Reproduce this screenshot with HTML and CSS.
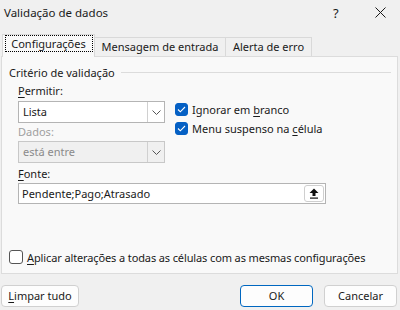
FILE: index.html
```html
<html>
<head>
    <meta charset="utf-8">
    <title>Validação de dados</title>
    <link rel="stylesheet" href="styles.css">
</head>
<body>
<div class="dialog">
    <div class="titlebar">
        <span class="caption">Validação de dados</span>
        <span class="help">?</span>
        <span class="close">
            <svg width="11" height="11" viewBox="0 0 11 11"><path d="M0.5 0.5L10.5 10.5M10.5 0.5L0.5 10.5" stroke="#1a1a1a" stroke-width="1" fill="none"/></svg>
        </span>
    </div>
    <div class="tabs">
        <div class="tab active"><span class="focus">Configurações</span></div>
        <div class="tab second">Mensagem de entrada</div>
        <div class="tab third">Alerta de erro</div>
    </div>
    <div class="panel">
        <div class="group">
            <span class="legend">Critério de validação</span>
            <span class="rule"></span>
        </div>
        <div class="fields">
            <div class="left">
                <div class="label"><u>P</u>ermitir:</div>
                <div class="select">
                    <span class="value">Lista</span>
                    <span class="arrow"><svg width="9" height="5" viewBox="0 0 9 5"><path d="M0.5 0.5L4.5 4.5L8.5 0.5" stroke="#555" fill="none"/></svg></span>
                </div>
                <div class="label disabled">Dados:</div>
                <div class="select off">
                    <span class="value">está entre</span>
                    <span class="arrow"><svg width="9" height="5" viewBox="0 0 9 5"><path d="M0.5 0.5L4.5 4.5L8.5 0.5" stroke="#555" fill="none"/></svg></span>
                </div>
            </div>
            <div class="right">
                <div class="check">
                    <span class="box on"><svg width="9" height="7" viewBox="0 0 9 7"><path d="M1 3.5L3.3 5.8L8 1" stroke="#fff" stroke-width="1.1" fill="none"/></svg></span>
                    <span>Ignorar em <u>b</u>ranco</span>
                </div>
                <div class="check">
                    <span class="box on"><svg width="9" height="7" viewBox="0 0 9 7"><path d="M1 3.5L3.3 5.8L8 1" stroke="#fff" stroke-width="1.1" fill="none"/></svg></span>
                    <span>Menu suspenso na <u>c</u>élula</span>
                </div>
            </div>
        </div>
        <div class="label fonte"><u>F</u>onte:</div>
        <div class="source">
            <span class="value">Pendente;Pago;Atrasado</span>
            <span class="collapse">
                <svg width="10" height="11" viewBox="0 0 10 11"><path d="M5 0.5L9.5 5H6.5V8H3.5V5H0.5Z" fill="#111"/><rect x="1" y="9.5" width="8" height="1.2" fill="#111"/></svg>
            </span>
        </div>
        <div class="apply">
            <span class="box"></span>
            <span><u>A</u>plicar alterações a todas as células com as mesmas configurações</span>
        </div>
    </div>
    <div class="footer">
        <span class="btn clear"><u>L</u>impar tudo</span>
        <span class="spacer"></span>
        <span class="btn primary">OK</span>
        <span class="btn">Cancelar</span>
    </div>
</div>
</body>
</html>
```

FILE: styles.css
```css
body {
    margin: 0;
    background: #f0f0f0;
    font-family: "Noto Sans", "Liberation Sans", sans-serif;
    font-size: 11px;
    color: #1a1a1a;
}

u {
    text-decoration-thickness: 1px;
    text-underline-offset: 2px;
}

.dialog {
    width: 400px;
    height: 310px;
    overflow: hidden;
}

.titlebar {
    display: flex;
    align-items: center;
    height: 25px;
    padding-left: 4px;
}

.caption {
    flex: 1;
    font-size: 11.5px;
}

.help {
    width: 12px;
    margin-right: 30px;
    font-size: 13px;
}

.close {
    display: flex;
    margin-right: 14px;
}

.tabs {
    display: flex;
    align-items: flex-end;
    margin-top: 9px;
    padding-left: 2px;
    height: 22px;
}

.tab {
    height: 19px;
    line-height: 18px;
    text-align: center;
    border: 1px solid #d9d9d9;
    border-bottom: 0;
    border-left: 0;
    background: #f0f0f0;
    box-sizing: border-box;
}

.tab.second {
    width: 131px;
}

.tab.third {
    width: 86px;
}

.tab.active {
    width: 93px;
    height: 23px;
    line-height: 21px;
    border-left: 1px solid #d9d9d9;
    background: #f9f9f9;
    position: relative;
    top: 1px;
}

.tab .focus {
    display: inline-block;
    width: 88px;
    line-height: 15px;
    border: 1px dotted #000;
    box-sizing: border-box;
}

.panel {
    margin-left: 1px;
    width: 397px;
    height: 218px;
    border: 1px solid #dcdcdc;
    background: #f9f9f9;
    box-sizing: border-box;
    padding: 7px 0 0 16px;
}

.group {
    display: flex;
    align-items: center;
    height: 16px;
    margin-left: -9px;
    margin-right: 6px;
}

.legend {
    padding-right: 6px;
}

.rule {
    flex: 1;
    height: 1px;
    background: #dcdcdc;
}

.fields {
    display: flex;
    margin-top: 3px;
}

.left {
    width: 147px;
}

.right {
    padding: 19px 0 0 10px;
}

.label {
    height: 16px;
    line-height: 16px;
    margin-bottom: 2px;
}

.label.disabled {
    color: #a0a0a0;
    margin-top: 1px;
    margin-bottom: 1px;
}

.label.fonte {
    margin-top: 3px;
    margin-bottom: 1px;
}

.select {
    display: flex;
    height: 22px;
    border: 1px solid #b4b4b4;
    background: #fff;
    box-sizing: border-box;
}

.select.off {
    background: #f0f0f0;
    border-color: #c8c8c8;
    color: #8a8a8a;
}

.select .value {
    flex: 1;
    line-height: 20px;
    padding-left: 4px;
}

.select .arrow {
    width: 16px;
    display: flex;
    align-items: center;
    justify-content: center;
    border-left: 1px solid #d0d0d0;
    background: #fff;
}

.select.off .arrow {
    background: #f0f0f0;
}

.check {
    display: flex;
    align-items: center;
    height: 14px;
    margin-bottom: 5px;
}

.box {
    width: 13px;
    height: 13px;
    border: 1px solid #5f5f5f;
    border-radius: 3px;
    box-sizing: border-box;
    margin-right: 4px;
    display: flex;
    align-items: center;
    justify-content: center;
    background: #fff;
}

.box.on {
    background: #0560c4;
    border-color: #0560c4;
}

.source {
    display: flex;
    align-items: center;
    width: 308px;
    height: 21px;
    border: 1px solid #b4b4b4;
    background: #fff;
    box-sizing: border-box;
}

.source .value {
    flex: 1;
    padding-left: 3px;
}

.collapse {
    width: 20px;
    height: 17px;
    margin-right: 1px;
    border: 1px solid #cfcfcf;
    border-radius: 3px;
    box-sizing: border-box;
    display: flex;
    align-items: center;
    justify-content: center;
}

.apply {
    display: flex;
    align-items: center;
    height: 16px;
    margin: 45px 0 0 -9px;
    letter-spacing: -0.12px;
}

.apply .box {
    width: 14px;
    height: 14px;
    border-color: #555;
}

.footer {
    display: flex;
    align-items: center;
    padding: 11px 3px 0 1px;
}

.spacer {
    flex: 1;
}

.btn {
    width: 73px;
    height: 22px;
    line-height: 20px;
    text-align: center;
    border: 1px solid #d0d0d0;
    border-radius: 4px;
    background: #fdfdfd;
    box-sizing: border-box;
    margin-left: 11px;
}

.btn.clear {
    margin-left: 0;
    width: 78px;
}

.btn.primary {
    border-color: #0067c0;
}
```
